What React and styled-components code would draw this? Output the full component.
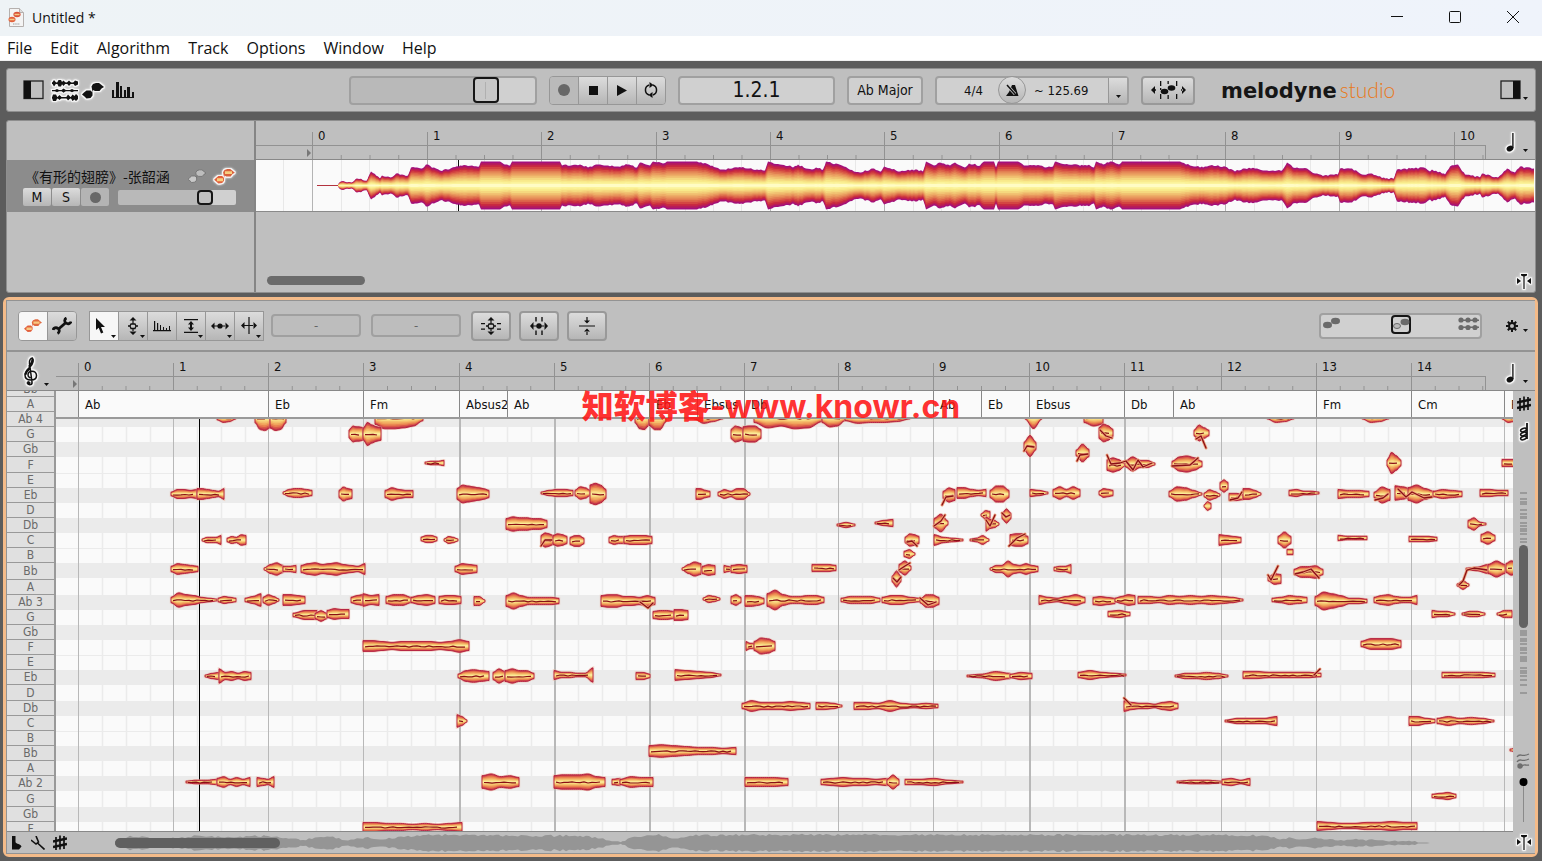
import React from 'react';
import styled, { createGlobalStyle, css } from 'styled-components';

const UI = `'DejaVu Sans Condensed', 'DejaVu Sans', 'Noto Sans CJK SC', sans-serif`;

const GlobalStyle = createGlobalStyle`
  * { box-sizing: border-box; }
  body { margin: 0; background: #5c5c5c; font-family: ${UI}; font-size: 13px; color: #111; }
  button, input { font: inherit; color: inherit; margin: 0; padding: 0; }
  svg { display: block; flex: none; }
`;

/* ---------- data ---------- */

const TRACK_BARS = [312, 427, 541, 656, 770, 884, 999, 1112, 1225, 1339, 1454];
const EDIT_BARS = [78, 173, 268, 363, 459, 554, 649, 744, 838, 933, 1029, 1124, 1221, 1316, 1411, 1504];
const WIDE_BARS = [459, 554, 649, 744, 1029, 1124];

const CHORDS = [
  [78, 'Ab'], [268, 'Eb'], [363, 'Fm'], [459, 'Absus2'], [507, 'Ab'], [649, 'Eb'], [697, 'Ebsus'], [744, 'Db'],
  [933, 'Ab'], [981, 'Eb'], [1029, 'Ebsus'], [1124, 'Db'], [1173, 'Ab'], [1316, 'Fm'], [1411, 'Cm'], [1504, 'Fm'],
];

const KEYS = [
  ['Bb', 6], ['A', 15], ['Ab 4', 15], ['G', 15], ['Gb', 15], ['F', 16], ['E', 15], ['Eb', 15], ['D', 15],
  ['Db', 15], ['C', 15], ['B', 15], ['Bb', 17], ['A', 15], ['Ab 3', 15], ['G', 15], ['Gb', 15], ['F', 15],
  ['E', 15], ['Eb', 15], ['D', 16], ['Db', 15], ['C', 15], ['B', 15], ['Bb', 15], ['A', 15], ['Ab 2', 15],
  ['G', 16], ['Gb', 15], ['F', 15],
];

// start, end, pitch centre, half heights along the note
const NOTES = [
  [217, 236, 418, [2, 5, 4, 1]], [255, 270, 418, [5, 13, 14, 11]], [270, 286, 418, [11, 14, 13, 5]],
  [375, 423, 418, [7, 12, 12, 11, 9, 3]], [635, 649, 418, [5, 12, 13, 8]], [649, 666, 418, [8, 13, 13, 4]],
  [694, 723, 418, [1, 6, 4, 1]], [754, 822, 418, [5, 11, 9, 12, 11, 4]], [822, 845, 418, [5, 10, 9, 3]],
  [845, 910, 418, [3, 6, 5, 5, 4, 1]], [1025, 1042, 418, [1, 12, 1]], [1084, 1103, 418, [5, 9, 7]],
  [1267, 1294, 418, [1, 5, 4, 1]], [1362, 1389, 418, [1, 5, 4, 1]], [1502, 1514, 418, [1, 5, 4]],

  [349, 363, 434, [4, 9, 8, 8, 7]], [363, 381, 434, [6, 13, 10, 8, 7]], [731, 743, 434, [5, 9, 8, 6]],
  [743, 761, 434, [8, 9, 9, 5]], [1099, 1113, 433, [6, 10, 8, 4]], [1194, 1209, 433, [3, 9, 6, 3]],
  [1024, 1036, 446, [4, 12, 4]], [1076, 1089, 453, [3, 10, 4]],

  [425, 444, 463, [1, 2, 2, 3]], [1107, 1125, 465, [6, 8, 6, 1]], [1125, 1155, 464, [3, 8, 4, 4, 1]],
  [1172, 1202, 464, [3, 8, 9, 7, 3]], [1387, 1401, 463, [3, 12, 8, 3]], [1502, 1514, 463, [4, 4, 4]],

  [171, 197, 494, [2, 5, 5, 4, 5]], [197, 224, 494, [6, 6, 5, 4, 3, 6]], [283, 312, 493, [1, 4, 5, 5, 4, 3]],
  [339, 352, 494, [4, 8, 6, 5]], [385, 413, 494, [4, 7, 5, 4, 4]], [457, 489, 494, [6, 10, 9, 8, 7, 6, 4]],
  [541, 573, 493, [1, 3, 4, 4, 3]], [575, 590, 493, [3, 7, 6, 3]], [590, 606, 494, [10, 12, 10, 5]],
  [696, 710, 494, [6, 6, 4, 3]], [718, 750, 494, [2, 5, 3, 6, 6, 1]], [943, 955, 495, [4, 8, 6]],
  [957, 986, 493, [6, 6, 4, 3, 4]], [990, 1009, 494, [4, 9, 9, 4]], [1030, 1048, 493, [4, 3, 1]],
  [1053, 1080, 493, [4, 7, 4, 7, 4]], [1099, 1113, 493, [2, 5, 4, 3]], [1169, 1202, 494, [3, 8, 7, 4, 1]],
  [1204, 1220, 495, [2, 6, 4, 1]], [1220, 1228, 486, [4, 7, 4]], [1204, 1211, 506, [1, 5, 3]],
  [1229, 1243, 497, [4, 4, 3]], [1243, 1261, 494, [6, 6, 4, 1]], [1289, 1319, 493, [3, 4, 2, 2, 1]],
  [1338, 1369, 494, [5, 4, 4, 3]], [1374, 1390, 495, [3, 9, 6]], [1395, 1410, 493, [8, 7, 5]],
  [1408, 1434, 494, [7, 10, 6, 3]], [1433, 1462, 494, [3, 5, 4, 3]], [1480, 1508, 493, [4, 4, 3, 3]],

  [506, 547, 524, [6, 8, 7, 7, 6, 6, 4]], [837, 855, 525, [1, 3, 1]], [875, 893, 523, [1, 3, 4]],
  [934, 948, 523, [5, 10, 2]], [981, 990, 515, [1, 5, 4]], [986, 999, 524, [8, 5, 4, 1]],
  [1002, 1011, 516, [3, 8, 3]], [1468, 1486, 524, [4, 7, 2, 1]],

  [202, 221, 540, [1, 3, 3, 3, 5]], [227, 246, 540, [2, 4, 3, 6, 5]], [421, 437, 539, [2, 4, 4, 2]],
  [444, 458, 540, [1, 4, 3, 1]], [541, 553, 540, [5, 8, 7, 5]], [553, 567, 540, [5, 7, 6, 4]],
  [570, 584, 541, [4, 6, 6, 3]], [609, 624, 540, [3, 5, 4, 4]], [624, 652, 540, [4, 5, 5, 5, 4]],
  [905, 919, 540, [3, 7, 6, 4]], [934, 963, 540, [6, 3, 2, 1]], [970, 989, 540, [1, 2, 5, 1]],
  [1010, 1028, 540, [6, 7, 7, 4]], [1219, 1241, 540, [6, 5, 4, 3]], [1278, 1291, 540, [4, 9, 4]],
  [1287, 1293, 552, [3, 3]], [1338, 1367, 538, [3, 2, 2, 2]], [1409, 1437, 539, [3, 3, 3, 2]],
  [1481, 1495, 538, [4, 7, 3]], [904, 915, 554, [3, 5, 1]],

  [171, 198, 569, [3, 6, 5, 4, 3]], [264, 283, 569, [1, 5, 7, 4]], [283, 296, 569, [3, 3, 4]],
  [301, 365, 569, [4, 6, 7, 5, 6, 7, 5, 4, 3, 6]], [455, 477, 569, [3, 6, 5, 4]], [682, 701, 569, [1, 5, 8, 6]],
  [702, 715, 570, [4, 6, 5]], [724, 732, 569, [4, 3, 2]], [731, 747, 569, [4, 5, 4]], [812, 836, 568, [4, 4, 4, 3]],
  [899, 911, 568, [4, 8, 2]], [892, 901, 579, [3, 9, 3]], [990, 1038, 569, [1, 4, 4, 9, 5, 4, 6, 4, 3]],
  [1054, 1071, 569, [2, 3, 3, 5]], [1294, 1323, 572, [3, 6, 6, 7, 3]], [1268, 1281, 579, [2, 6, 5]],
  [1457, 1469, 585, [1, 5, 1]], [1466, 1488, 569, [1, 2, 5]], [1488, 1505, 569, [5, 9, 5]], [1506, 1516, 568, [5, 8, 7]],

  [171, 217, 600, [3, 8, 6, 5, 3, 2, 1]], [218, 236, 600, [2, 4, 3, 2]], [245, 261, 600, [2, 4, 7]],
  [263, 279, 600, [3, 6, 4, 1]], [283, 305, 600, [6, 6, 5, 4]], [351, 363, 600, [3, 5, 6]], [363, 379, 600, [7, 5, 6]],
  [386, 411, 600, [4, 6, 6, 3]], [411, 435, 600, [3, 5, 6, 4]], [439, 461, 600, [4, 5, 5, 4]],
  [474, 485, 601, [5, 5, 1]], [506, 559, 601, [6, 9, 6, 4, 4, 4, 4, 3]], [601, 655, 601, [6, 7, 7, 5, 5, 4, 6, 4]],
  [703, 720, 599, [1, 4, 3, 1]], [731, 741, 600, [4, 6, 3]], [745, 764, 601, [6, 6, 5, 3]],
  [767, 824, 600, [7, 11, 6, 4, 4, 5, 5, 3]], [841, 880, 600, [2, 4, 4, 4, 2]], [882, 920, 600, [3, 5, 5, 3, 2]],
  [920, 939, 601, [2, 7, 7, 4]], [1039, 1085, 600, [5, 3, 2, 4, 6, 3]], [1093, 1115, 601, [4, 5, 4, 3]],
  [1115, 1135, 600, [2, 4, 6, 5]], [1138, 1243, 600, [4, 4, 3, 5, 4, 5, 4, 5, 4, 3, 1]],
  [1272, 1307, 600, [2, 3, 5, 4, 3]], [1315, 1367, 601, [5, 10, 8, 6, 3, 3, 2]], [1374, 1417, 600, [3, 5, 6, 4, 3, 3, 5]],

  [293, 317, 615, [2, 5, 5]], [315, 327, 616, [3, 6, 3]], [327, 349, 614, [4, 6, 5, 5]], [653, 674, 615, [4, 5, 5, 4]],
  [674, 688, 615, [6, 6, 5]], [1108, 1130, 614, [3, 4, 2]], [1432, 1455, 614, [4, 3, 3, 1]],
  [1462, 1485, 614, [1, 3, 3, 1]], [1497, 1512, 614, [1, 4, 4]],

  [363, 469, 646, [6, 6, 5, 4, 5, 5, 5, 5, 4, 5, 7, 5]], [746, 754, 646, [5, 3, 3]], [754, 775, 646, [5, 9, 8, 5]],
  [1361, 1401, 644, [3, 6, 6, 6, 4]],

  [205, 219, 676, [1, 3, 4]], [219, 251, 676, [8, 4, 5, 3, 5, 4]], [458, 489, 676, [2, 6, 7, 6, 5]],
  [493, 505, 676, [4, 8, 5]], [505, 534, 676, [6, 8, 6, 6, 3]], [554, 593, 675, [5, 3, 3, 2, 2, 8]],
  [636, 650, 676, [4, 4, 2]], [675, 721, 675, [6, 5, 4, 3, 1]], [967, 1010, 676, [1, 2, 5, 3]],
  [1010, 1032, 676, [2, 4, 3]], [1078, 1126, 675, [3, 5, 3, 2, 1]], [1175, 1228, 676, [1, 3, 3, 4, 3, 1]],
  [1243, 1321, 675, [4, 4, 3, 3, 3, 3, 2]], [1442, 1495, 675, [3, 3, 3, 3, 2]],

  [742, 810, 706, [3, 6, 4, 4, 4, 5, 4, 3]], [816, 842, 706, [4, 4, 3, 1]], [854, 938, 706, [4, 4, 3, 6, 3, 2, 3, 2]],
  [1124, 1178, 706, [6, 4, 3, 3, 2, 4, 5, 3]], [457, 467, 721, [7, 5, 1]], [1225, 1277, 721, [1, 3, 3, 3, 5]],
  [1409, 1435, 721, [5, 5, 3, 2]], [1437, 1494, 721, [3, 5, 3, 4, 3, 1]], [649, 736, 751, [6, 7, 6, 5, 4, 4, 3, 4]],
  [1510, 1516, 750, [1, 2]],

  [186, 217, 782, [1, 2, 2, 3]], [217, 250, 782, [4, 6, 3, 5, 3, 5]], [257, 274, 782, [5, 4, 3, 6]],
  [482, 519, 782, [7, 9, 6, 7, 5]], [554, 605, 782, [7, 8, 8, 8, 9, 6, 5]], [612, 620, 782, [3, 4]],
  [620, 653, 782, [3, 6, 5, 5]], [745, 788, 782, [5, 5, 5, 4]], [821, 887, 782, [3, 4, 5, 4, 4, 3, 4]],
  [887, 899, 782, [3, 8, 3]], [905, 963, 782, [3, 3, 4, 2, 1]], [1177, 1222, 782, [1, 2, 2, 1]],
  [1222, 1250, 782, [3, 4, 2, 4]], [1432, 1456, 796, [2, 3, 4, 2]],
  [363, 462, 827, [5, 5, 4, 4, 3, 4, 3, 4, 5]], [1317, 1417, 826, [5, 4, 3, 3, 4, 4, 5, 4, 4]],
];

// pitch glides that leave their note
const GLIDES = [
  '1196,439 1201,436 1206,448', '942,505 946,497 953,496', '934,526 941,521 945,515', '541,546 545,540 552,540',
  '1009,546 1017,538 1025,534', '907,542 912,541 917,546', '1024,451 1027,446 1034,447', '1077,461 1080,455 1088,454',
  '1107,455 1111,464 1120,463 1126,461 1133,470 1138,460 1143,467 1152,463', '1268,575 1271,580 1278,566',
  '1459,585 1463,581 1467,570 1474,568 1487,570', '1295,574 1303,572 1311,569 1319,578', '986,520 990,526 995,515',
  '1172,466 1190,465 1198,458', '1375,500 1383,498 1388,494', '1124,698 1131,705', '1314,675 1320,669',
  '1230,500 1238,498 1242,492', '1002,513 1006,517 1010,515', '1100,430 1106,436 1112,438', '893,578 897,582 901,577',
  '920,598 928,605 936,602', '640,602 648,608 653,603', '1398,489 1406,497 1412,492 1424,498 1432,497', '899,570 905,566 910,563',
];

const TRACK_WAVE = [
  [338, 1], [341, 4], [352, 3], [357, 7], [367, 5], [371, 14], [376, 10], [380, 7], [382, 10], [391, 8], [396, 12],
  [408, 10], [411, 18], [422, 17], [426, 21], [440, 15], [447, 16], [460, 20], [479, 19], [481, 24], [500, 24],
  [505, 21], [510, 20], [512, 24], [560, 24], [562, 20], [580, 21], [588, 18], [598, 21], [606, 20], [618, 19],
  [627, 21], [637, 18], [640, 23], [650, 20], [653, 24], [663, 22], [668, 24], [697, 24], [712, 20], [720, 16],
  [741, 18], [765, 15], [768, 24], [780, 21], [790, 20], [793, 18], [798, 21], [806, 17], [812, 16], [816, 18],
  [823, 16], [826, 24], [842, 20], [854, 14], [861, 13], [872, 17], [881, 14], [884, 19], [900, 14], [915, 16],
  [923, 14], [926, 24], [934, 20], [940, 23], [950, 20], [955, 23], [965, 18], [969, 22], [980, 20], [984, 24],
  [994, 24], [996, 18], [998, 24], [1018, 24], [1024, 20], [1040, 20], [1045, 18], [1053, 19], [1055, 24], [1068, 21],
  [1083, 20], [1090, 20], [1094, 18], [1096, 24], [1103, 21], [1110, 24], [1119, 21], [1122, 24], [1180, 24],
  [1190, 20], [1203, 18], [1210, 20], [1225, 19], [1235, 14], [1245, 17], [1257, 17], [1265, 15], [1282, 15],
  [1287, 23], [1293, 18], [1307, 17], [1315, 12], [1324, 10], [1338, 11], [1340, 17], [1352, 17], [1362, 11],
  [1370, 12], [1385, 7], [1394, 7], [1397, 16], [1410, 17], [1424, 18], [1430, 14], [1432, 16], [1445, 11],
  [1450, 19], [1458, 21], [1465, 11], [1480, 8], [1482, 12], [1498, 8], [1507, 17], [1515, 13], [1520, 19],
  [1534, 17],
];

const OVERVIEW = [
  [115, 2], [130, 8], [160, 5], [170, 5], [200, 8], [225, 6], [265, 8], [290, 5], [300, 3], [330, 7], [345, 3],
  [365, 6], [380, 4], [405, 7], [430, 9], [500, 8], [580, 8], [600, 5], [612, 2], [622, 2], [635, 7], [660, 9],
  [675, 5], [690, 8], [730, 9], [1000, 9], [1220, 9], [1265, 8], [1280, 4], [1290, 6], [1300, 4], [1315, 6],
  [1335, 3], [1360, 4], [1380, 3], [1400, 2], [1430, 0],
];

const MINIMAP = [
  492, 498, 501, 503, 509, 513, 516, 517, 522, 525, 528, 530, 533, 538, 541, 630, 632, 634, 638, 640, 643, 647, 649,
  652, 656, 658, 660, 667, 670, 672, 675, 679, 684, 692,
];

const FIRE = ['#a3107c', '#b81c58', '#c92a40', '#d34642', '#db6249', '#e27e52', '#e8975d', '#edae67', '#f1c373', '#f5d87f', '#f8e98a', '#fbf39a', '#fffcc4'];
const EMBER = ['#c2364a', '#db5a48', '#e98350', '#f0a35c', '#f4bf6c', '#f8d980', '#fbea98'];

const jitter = (n) => {
  const v = Math.sin(n * 12.9898) * 43758.5453;
  return (v - Math.floor(v)) * 2 - 1;
};

/* ---------- shapes ---------- */

const mirror = (points, cy, k) => {
  const top = points.map(([x, h]) => `${x},${(cy - h * k).toFixed(1)}`);
  const bottom = points.map(([x, h]) => `${x},${(cy + h * k).toFixed(1)}`).reverse();
  return [...top, ...bottom].join(' ');
};

const densify = (points, step, amount) => {
  const out = [];
  points.forEach(([x, h], i) => {
    const next = points[i + 1];
    out.push([x, h]);
    if (!next) return;
    for (let px = x + step; px < next[0]; px += step) {
      const t = (px - x) / (next[0] - x);
      const v = h + (next[1] - h) * t;
      out.push([px, v >= 23.5 && h >= 23.5 ? v : Math.max(0.4, v + jitter(px) * amount)]);
    }
  });
  return out;
};

const smooth = (x0, x1, halves) => {
  const out = [];
  const count = Math.max(6, Math.round((x1 - x0) / 2));
  for (let i = 0; i <= count; i++) {
    const pos = (i / count) * (halves.length - 1);
    const a = Math.floor(pos);
    const b = Math.min(a + 1, halves.length - 1);
    const t = pos - a;
    const ease = t * t * (3 - 2 * t);
    out.push([+(x0 + ((x1 - x0) * i) / count).toFixed(1), halves[a] + (halves[b] - halves[a]) * ease]);
  }
  return out;
};

function Note({ x0, x1, cy, halves }) {
  const shape = smooth(x0, x1, halves.map((h) => h * 0.9));
  const line = [];
  for (let x = x0 + 2; x <= x1 - 2; x += 4) {
    line.push(`${x},${(cy + 0.5 + jitter(x + cy) * 0.7).toFixed(1)}`);
  }
  return (
    <g>
      <polygon points={mirror(shape, cy, 1)} fill="none" stroke="#eeb59a" strokeWidth="2.4" strokeOpacity="0.5" />
      {EMBER.map((color, i) => (
        <polygon key={color} points={mirror(shape, cy, 1 - i / EMBER.length)} fill={color} />
      ))}
      <polygon points={mirror(shape, cy, 1)} fill="none" stroke="#b31c3c" strokeWidth="0.9" strokeLinejoin="round" />
      <polyline points={line.join(' ')} fill="none" stroke="#8a0f14" strokeWidth="1.2" strokeLinejoin="round" />
    </g>
  );
}

/* ---------- window frame ---------- */

const Window = styled.div`
  display: flex;
  flex-direction: column;
  height: 100vh;
  min-height: 640px;
  background: #5c5c5c;
  overflow: hidden;
`;

const TitleBar = styled.header`
  display: flex;
  align-items: center;
  flex: none;
  height: 36px;
  padding: 0 0 2px 8px;
  gap: 8px;
  background: linear-gradient(to right, #eef3f6, #eff3fb);
  font: 14px 'Open Sans', sans-serif;
`;

const WindowButtons = styled.div`
  display: flex;
  margin-left: auto;
`;

const WindowButton = styled.button`
  display: grid;
  place-items: center;
  width: 58px;
  height: 34px;
  border: 0;
  background: none;
`;

const MenuBar = styled.nav`
  display: flex;
  align-items: center;
  flex: none;
  gap: 18px;
  height: 25px;
  padding-left: 7px;
  background: #fff;
  border-bottom: 1px solid #f0f0f0;
  font: 16px 'Open Sans', sans-serif;
`;

const MenuItem = styled.button`
  border: 0;
  background: none;
`;

const Workspace = styled.main`
  position: relative;
  display: flex;
  flex-direction: column;
  flex: 1;
  min-height: 0;
  padding: 7px 4px 4px 3px;
`;

const panel = css`
  margin: 0 2px 0 3px;
  background: #bfbfbf;
  border: 1px solid #8f8f8f;
  border-radius: 3px;
`;

/* ---------- controls ---------- */

const Transport = styled.div`
  ${panel}
  display: flex;
  align-items: center;
  gap: 12px;
  flex: none;
  height: 44px;
`;

const ViewButtons = styled.div`
  display: flex;
  align-items: center;
  flex: 0 0 330px;
  gap: 4px;
  padding-left: 16px;
`;

const IconButton = styled.button`
  display: flex;
  align-items: flex-end;
  border: 0;
  background: none;
`;

const glow = css`
  filter: drop-shadow(1px 0 0 #f4f4f4) drop-shadow(-1px 0 0 #f4f4f4) drop-shadow(0 1px 0 #f4f4f4)
    drop-shadow(0 -1px 0 #f4f4f4) drop-shadow(0 0 1px #f4f4f4);
`;

const GlowButton = styled(IconButton)`
  ${glow}
`;

const raised = css`
  display: flex;
  align-items: center;
  justify-content: center;
  border: 1px solid #979797;
  background: linear-gradient(#dcdcdc, #b6b6b6);
`;

const Button = styled.button`
  ${raised}
  width: ${(p) => p.$w}px;
  height: ${(p) => p.$h || 29}px;
  border-width: 2px;
  border-color: #999;
  border-radius: 4px;
`;

const ButtonGroup = styled.div`
  display: flex;
  border: 1px solid #979797;
  border-radius: ${(p) => (p.$square ? 0 : 4)}px;
  overflow: hidden;
`;

const GroupButton = styled.button`
  ${raised}
  box-sizing: content-box;
  position: relative;
  width: 28px;
  height: ${(p) => p.$h || 27}px;
  border: 0;
  border-left: 1px solid #979797;
  ${(p) => p.$active && 'background: #f7f7f7;'}
  ${(p) => p.$disabled && 'background: #bababa;'}
  &:first-child { border-left: 0; }
`;

const Corner = styled.svg`
  position: absolute;
  right: 2px;
  bottom: 2px;
`;

const Field = styled.input`
  width: ${(p) => p.$w}px;
  height: ${(p) => p.$h || 29}px;
  border: 2px solid #a0a0a0;
  border-radius: 4px;
  background: ${(p) => (p.$dim ? '#bdbdbd' : '#d0d0d0')};
  color: ${(p) => (p.$dim ? '#666' : '#111')};
  font-size: ${(p) => p.$size || 13}px;
  text-align: center;
`;

const KeyButton = styled.button`
  width: 76px;
  height: 29px;
  border: 2px solid #a0a0a0;
  border-radius: 4px;
  background: #d0d0d0;
  font-size: 14px;
  white-space: nowrap;
`;

const Tempo = styled.div`
  display: flex;
  align-items: center;
  width: 194px;
  height: 29px;
  border: 2px solid #a0a0a0;
  border-radius: 4px;
  background: #d0d0d0;
`;

const Meter = styled.button`
  width: 61px;
  padding-left: 12px;
  border: 0;
  background: none;
`;

const Metronome = styled.button`
  ${raised}
  width: 28px;
  height: 28px;
  border-radius: 50%;
`;

const TempoInput = styled.input`
  flex: 1;
  width: 60px;
  border: 0;
  padding-left: 8px;
  background: none;
`;

const TempoMenu = styled.button`
  ${raised}
  align-items: flex-end;
  width: 19px;
  height: 25px;
  padding-bottom: 5px;
  border-width: 0 0 0 1px;
`;

const Range = styled.input`
  appearance: none;
  width: ${(p) => p.$w}px;
  height: ${(p) => p.$h}px;
  border: ${(p) => (p.$line ? 2 : 0)}px solid #a0a0a0;
  border-radius: ${(p) => (p.$line ? 4 : 2)}px;
  background: ${(p) => (p.$clear ? 'transparent' : 'linear-gradient(to right, #b9b9b9 70%, #d0d0d0 74%)')};
  &::-webkit-slider-thumb {
    appearance: none;
    width: ${(p) => p.$thumb}px;
    height: ${(p) => p.$thumbH}px;
    border: 2px solid #161616;
    border-radius: 4px;
    background: ${(p) => (p.$line ? 'linear-gradient(#b0b0b0, #b0b0b0) center / 1px 17px no-repeat #c8c8c8' : p.$clear ? 'transparent' : '#c0c0c0')};
  }
`;

const Logo = styled.div`
  display: flex;
  align-items: baseline;
  margin-left: 14px;
  gap: 3px;
  font: bold 21px 'DejaVu Sans', sans-serif;
  color: #161616;
`;

const LogoLight = styled.span`
  font: 300 21px Lato, 'Open Sans', sans-serif;
  color: #e8791c;
`;

const FarRight = styled(IconButton)`
  margin: 0 7px 0 auto;
`;

/* ---------- tracks ---------- */

const Tracks = styled.section`
  ${panel}
  display: flex;
  flex: none;
  height: 173px;
  margin-top: 8px;
`;

const TrackList = styled.div`
  width: 249px;
  padding-top: 39px;
  border-right: 2px solid #858585;
`;

const TrackHead = styled.div`
  display: flex;
  flex-direction: column;
  gap: 1px;
  height: 52px;
  padding: 5px 17px 0 16px;
  background: #8c8c8c;
`;

const TrackLine = styled.div`
  display: flex;
  align-items: center;
`;

const TrackName = styled.span`
  flex: 1;
  padding-left: 2px;
  font: 14px/22px 'Noto Sans CJK SC', sans-serif;
  white-space: nowrap;
`;

const MiniGroup = styled.div`
  display: flex;
  gap: 1px;
  margin-right: 9px;
`;

const MiniButton = styled.button`
  ${raised}
  width: 28px;
  height: 18px;
  border: 0;
  border-radius: 2px;
  font-size: 14px;
  ${(p) => p.$disabled && 'background: #b4b4b4;'}
`;

const TrackPane = styled.div`
  display: flex;
  flex-direction: column;
  flex: 1;
  min-width: 0;
`;

const TrackCanvas = styled.svg`
  width: 100%;
  height: 52px;
  background: #fafafa;
  border-bottom: 1px solid #8a8a8a;
`;

const TrackFooter = styled.div`
  display: flex;
  align-items: flex-end;
  justify-content: space-between;
  flex: 1;
  padding: 0 4px 3px 11px;
`;

const ScrollThumb = styled.div`
  width: 98px;
  height: 9px;
  margin-bottom: 4px;
  border-radius: 5px;
  background: #6b6b6b;
`;

/* ---------- ruler ---------- */

const RulerBox = styled.div`
  display: flex;
  flex: none;
  height: 39px;
  border-bottom: 1px solid #888;
`;

const Scale = styled.div`
  display: flex;
  flex: 1;
  min-width: 0;
  overflow: hidden;
  background:
    linear-gradient(#929292, #929292) 0 24px / 100% 1px no-repeat,
    linear-gradient(#929292, #929292) right bottom / 1px 14px no-repeat;
`;

const Bar = styled.div`
  flex: 0 0 ${(p) => p.$w}px;
  padding-left: 6px;
  line-height: 30px;
  background:
    linear-gradient(#929292, #929292) left bottom / 1px 27px no-repeat,
    linear-gradient(to right, #929292 1px, transparent 1px) left bottom / 25% 4px repeat-x;
  ${(p) => p.$lead && css`
    display: flex;
    align-items: flex-end;
    justify-content: flex-end;
    padding: 0 1px 2px 0;
    background: none;
  `}
`;

const RulerEnd = styled.div`
  display: flex;
  align-items: flex-end;
  gap: 8px;
  width: 49px;
  padding: 0 8px 7px 20px;
`;

const Glow = styled.div`
  ${glow}
`;

/* ---------- editor ---------- */

const Editor = styled.section`
  display: flex;
  flex-direction: column;
  flex: 1;
  min-height: 0;
  margin-top: 4px;
  border: 3px solid #f4bb89;
  border-radius: 6px;
  background: #bfbfbf;
`;

const EditorTools = styled.div`
  display: flex;
  align-items: center;
  flex: none;
  height: 52px;
  padding: 0 7px 0 11px;
  border: solid #939393;
  border-width: 1px 0 2px 1px;
`;

const ToolGap = styled.div`
  width: ${(p) => p.$w}px;
`;

const ViewSwitch = styled.div`
  position: relative;
  margin: 0 24px 0 auto;
  border: 2px solid #a0a0a0;
  border-radius: 4px;
  background: #d0d0d0;
`;

const SwitchIcons = styled.svg`
  position: absolute;
  left: 0;
  top: 0;
  pointer-events: none;
`;

const Body = styled.div`
  display: grid;
  grid-template-columns: 49px 1fr 22px;
  grid-template-rows: 39px 28px 1fr 22px;
  flex: 1;
  min-height: 0;
  border: solid #939393;
  border-width: 0 0 1px 1px;
`;

const ClefCell = styled.div`
  display: flex;
  align-items: flex-end;
  gap: 6px;
  padding: 0 0 4px 17px;
  border-bottom: 1px solid #888;
`;

const EditorRuler = styled.div`
  grid-column: 2 / 4;
`;

const Keys = styled.div`
  grid-row: 2 / 4;
  overflow: hidden;
  border-right: 2px solid #999;
  background: #e0e0e0;
`;

const Key = styled.div`
  display: flex;
  align-items: ${(p) => (p.$h < 10 ? 'flex-end' : 'center')};
  justify-content: center;
  height: ${(p) => p.$h}px;
  overflow: hidden;
  border-bottom: 1px solid #999;
  font-size: 12px;
  line-height: 14px;
  color: #6a6a6a;
`;

const ChordRow = styled.div`
  display: flex;
  overflow: hidden;
  min-width: 0;
  background: #fafafa;
  border-bottom: 2px solid #9a9a9a;
`;

const Chord = styled.div`
  flex: 0 0 ${(p) => p.$w}px;
  overflow: hidden;
  padding-left: ${(p) => (p.$lead ? 0 : 6)}px;
  border-left: ${(p) => (p.$lead ? 0 : 1)}px solid #888;
  background: ${(p) => (p.$lead ? '#ebebeb' : 'none')};
  line-height: 27px;
  white-space: nowrap;
`;

const Roll = styled.div`
  min-width: 0;
  overflow: hidden;
  background: #fafafa;
`;

const RollCanvas = styled.svg`
  width: 100%;
  height: 100%;
`;

const SideColumn = styled.div`
  display: flex;
  flex-direction: column;
  align-items: center;
  grid-row: 2 / 4;
  grid-column: 3;
  min-height: 0;
  overflow: hidden;
  padding-top: 5px;
`;

const Footer = styled.div`
  display: flex;
  align-items: center;
  grid-column: 1 / 3;
  min-width: 0;
  overflow: hidden;
  border-top: 1px solid #888;
`;

const FooterCanvas = styled.svg`
  width: 100%;
  height: 22px;
  flex: 1;
  min-width: 0;
`;

const FooterIcons = styled.div`
  display: flex;
  align-items: center;
  gap: 8px;
  width: 63px;
  padding-left: 4px;
`;

const FooterEnd = styled.div`
  ${glow}
  display: grid;
  place-items: center;
`;

const Watermark = styled.div`
  position: absolute;
  top: 325px;
  left: 0;
  right: 0;
  display: flex;
  align-items: baseline;
  justify-content: center;
  pointer-events: none;
  font: 900 32px/36px 'Noto Sans CJK SC', sans-serif;
  color: rgba(255, 22, 22, 0.9);
`;

const WatermarkUrl = styled.span`
  font: 700 32px/36px Inter, sans-serif;
`;

/* ---------- icons ---------- */

const Caret = () => (
  <svg width="5" height="3" viewBox="0 0 5 3"><path d="M0 0h5L2.5 3z" fill="#111" /></svg>
);

const ToolCaret = () => (
  <Corner width="5" height="3" viewBox="0 0 5 3"><path d="M0 0h5L2.5 3z" fill="#111" /></Corner>
);

function BlobsIcon({ w = 22, h = 17, left = '#111', right = left, line, edge }) {
  return (
    <svg width={w} height={h} viewBox="0 0 22 17">
      <path d="M0 12.5L2 10.500 4.500 8.500H8.500L10.500 10.500V13.500L8.500 16 4.500 16.500 2.500 14.500z" fill={left} stroke={edge} />
      <path d="M10.500 11v-1.500L9.500 4.500 11 2 14 1H17L19.500 3 22 5 19.500 6.500 17.500 9H13L11 8" fill={right} stroke={edge} />
      {line && <path d="M3 12.500H9.500M11.500 5H19" stroke={line} strokeWidth="3" />}
    </svg>
  );
}

const TracksIcon = () => (
  <svg width="26" height="21" viewBox="0 0 26 21" fill="#111">
    <path d="M0 2.500h26v1.500H0zM0 10h26v1.200H0zM0 17h26v1.500H0z" />
    <path d="M0 3l2-3 2.500 3L2 6.500zM5 3l1.500-3H9l1.500 3L9 6.500H6.500zM9 3l2.500-2.500L14 3l-2.500 3zM14.500 3L17 .500 19.500 3 17 6zM21 3l2-2.500 3 1v3L23 6z" />
    <path d="M2 10.600L5 9l3 1.600L5 12.300zM9 10.600L11.500 8.500l3 2.100-3 2.200zM17 10.600L20 9l3 1.600-3 1.700z" />
    <path d="M0 17.500l1-3h3l1.500 3L4 21H1zM5 17.500L7.500 15l2.500 2.500L7.500 20zM14 17.500l2-3 3 3-3 3zM18.500 17.500l2-3 2 1.500 1.500-2 2 2v3l-2 2-1.500-1.500-2 1.500z" />
  </svg>
);

const DockIcon = ({ flip }) => (
  <svg width="21" height="20" viewBox="0 0 21 20">
    <rect x="1" y="1" width="19" height="17.500" fill="none" stroke="#222" strokeWidth="1.300" />
    <rect x={flip ? 13 : 1} y="1" width="7" height="17.500" fill="#111" />
  </svg>
);

const BarsIcon = () => (
  <svg width="22" height="16" viewBox="0 0 22 16" fill="#111">
    <path d="M0 8h2v8H0zM4 0h3v16H4zM8 4h2v12H8zM12 8h2v8h-2zM15 5h3v11h-3zM20 10h2v6h-2zM0 15h22v1H0z" />
  </svg>
);

const QuarterNote = () => (
  <svg width="9" height="19" viewBox="0 0 9 19">
    <ellipse cx="4" cy="15.500" rx="3.500" ry="2.700" transform="rotate(-25 4 15.500)" fill="#111" />
    <path d="M6.900 15V0" stroke="#111" strokeWidth="1.300" />
  </svg>
);

const SplitIcon = () => (
  <svg width="14" height="15" viewBox="0 0 14 15" fill="#111">
    <path d="M6.400 1h1.200v14H6.400zM4 0h6v1.500L7.600 2.500H6.400L4 1.500zM0 4v6l4-3zM14 4v6l-4-3z" />
  </svg>
);

const GridIcon = () => (
  <svg width="14" height="16" viewBox="0 0 14 16" stroke="#111" fill="none">
    <path d="M3 2v13M7 0.500v14M11 1v13" strokeWidth="1.700" />
    <path d="M0 6.500l14-3M0 12l14-3" strokeWidth="2.500" />
  </svg>
);

const ClefIcon = () => (
  <svg width="14" height="29" viewBox="0 0 14 29" fill="none" stroke="#111" strokeLinecap="round">
    <path d="M4 26.500c1 2 4.500 1.500 4-1.500L5.500 6.500C5 3 7 1 8.300 1c1.500 2.500.7 6-2.300 9-3 3-5 4.500-5 8 0 4 3 5 6 5s5.500-1.500 5.500-4.500-2-4.300-4.500-4.300S4 16 4 18c0 1.500.8 2.300 2 2.800" strokeWidth="1.500" />
    <path d="M8.500 2.500c0 3-1.500 4.500-3 6.500M1.600 17c.5-2.500 2-4 4-5.500" strokeWidth="2.200" />
    <circle cx="4.500" cy="26" r="1.400" fill="#111" />
  </svg>
);

const WrenchIcon = () => (
  <svg width="20" height="18" viewBox="0 0 20 18" fill="none" stroke="#111">
    <path d="M6 12.500L14 5.500" strokeWidth="2.800" />
    <path d="M14.500 1c-2 1-2.500 3.500-.5 5s4.500.5 5-1.500" strokeWidth="2.800" />
    <path d="M1 13c.5-2 3-3 5-1.500s1.500 4-.5 5" strokeWidth="2.800" />
  </svg>
);

const ArrowIcon = () => (
  <svg width="10" height="16" viewBox="0 0 10 16"><path d="M0 0v12l2.700-2.300 2.300 5.800 2.300-1L5 9H9z" fill="#111" /></svg>
);

const PitchIcon = ({ sides }) => (
  <svg width="20" height="18" viewBox="0 0 20 18" fill="#111">
    <path d="M10 0l3.500 3.500h-7zM10 18l3.500-3.500h-7zM9.400 3h1.200v4H9.400zM9.400 11h1.200v4H9.400z" />
    <path d="M5 9h2l1-2h4l1 2h2M7 9l1 2.500h4L13 9" fill="none" stroke="#111" strokeWidth="1.300" />
    {sides && <path d="M0 6h4v1.300H0zM0 11.500h4v1.300H0zM16 6h4v1.300h-4zM16 11.500h4v1.300h-4z" />}
  </svg>
);

const FormantIcon = () => (
  <svg width="18" height="12" viewBox="0 0 18 12" fill="#111">
    <path d="M0 10h18v1.200H0zM1 1h1.200v10H1zM4 3h1.200v8H4zM7 5h1v6H7zM10 7h1v4h-1zM13 8h1v3h-1zM16 6h1v5h-1z" />
  </svg>
);

const AmpIcon = () => (
  <svg width="14" height="14" viewBox="0 0 14 14" fill="#111">
    <path d="M0 0h14v1.200H0zM0 12.800h14V14H0zM7 2l3 3.500H4zM7 12L4 8.500h6zM6 5h2v4H6z" />
  </svg>
);

const TimeIcon = () => (
  <svg width="18" height="8" viewBox="0 0 18 8" fill="#111">
    <path d="M0 4l3.500-3.500v7zM18 4l-3.500-3.500v7zM3 3.400h12v1.200H3z" /><circle cx="9" cy="4" r="2.600" />
  </svg>
);

const SeparateIcon = () => (
  <svg width="16" height="17" viewBox="0 0 16 17" fill="#111">
    <path d="M7.400 0h1.200v17H7.400zM0 8.500L3.500 5v7zM16 8.500L12.500 5v7zM3 7.900h10v1.200H3z" />
  </svg>
);

const QuantTimeIcon = () => (
  <svg width="18" height="18" viewBox="0 0 18 18" fill="#111">
    <path d="M0 9l3.500-4v8zM18 9l-3.500-4v8zM3 8.400h12v1.200H3zM5.300 0h1.400v4.500H5.300zM11.300 0h1.400v4.500h-1.400zM5.300 13.500h1.400V18H5.300zM11.300 13.500h1.400V18h-1.400z" />
    <circle cx="9" cy="9" r="2.700" />
  </svg>
);

const LevelIcon = () => (
  <svg width="16" height="20" viewBox="0 0 16 20" fill="#111">
    <path d="M0 9.400h16v1.200H0zM7.400 1h1.200v4H7.400zM8 7.500L5 4.500h6zM7.400 15h1.200v4H7.400zM8 12.500L5 15.500h6z" />
  </svg>
);

const GearIcon = () => (
  <svg width="12" height="12" viewBox="0 0 12 12" fill="none" stroke="#111">
    <circle cx="6" cy="6" r="3" strokeWidth="2" />
    <path d="M6 0v2.500M6 9.500V12M0 6h2.500M9.500 6H12M1.800 1.800l1.700 1.700M8.500 8.500l1.700 1.700M10.200 1.800L8.500 3.500M3.500 8.500l-1.700 1.700" strokeWidth="2" />
  </svg>
);

/* ---------- sections ---------- */

function Ruler({ bars, origin, end }) {
  return (
    <RulerBox>
      <Scale>
        <Bar $lead $w={bars[0] - origin}>
          <svg width="4" height="8" viewBox="0 0 4 8"><path d="M0 0l4 4-4 4z" fill="#777" /></svg>
        </Bar>
        {bars.map((x, i) => (
          <Bar key={x} $w={(bars[i + 1] || end) - x}>{i}</Bar>
        ))}
      </Scale>
      <RulerEnd>
        <Glow><QuarterNote /></Glow>
        <Caret />
      </RulerEnd>
    </RulerBox>
  );
}

function TrackWave() {
  const wave = densify(TRACK_WAVE, 2, 0.8);
  return (
    <TrackCanvas role="img" aria-label="Track waveform">
      <g transform="translate(-256 -160)">
        {TRACK_BARS.map((x) => (
          <g key={x}>
            <path d={`M${x + 0.5} 160v51`} stroke="#b4b4b4" />
            <path d={`M${x - 28.5} 160v51M${x + 29.5} 160v51M${x + 57.5} 160v51`} stroke="#e8e8e8" />
          </g>
        ))}
        <path d="M458.500 160v51" stroke="#111" />
        <path d="M317 185.500h25" stroke="#b3323e" />
        {FIRE.map((color, i) => (
          <polygon key={color} points={mirror(wave, 185.5, 1 - i / FIRE.length)} fill={color} />
        ))}
      </g>
    </TrackCanvas>
  );
}

function PianoRoll() {
  let y = 391;
  const rows = KEYS.map(([name, h], i) => {
    const row = { name, y, i };
    y += h;
    return row;
  });
  return (
    <RollCanvas role="img" aria-label="Notes">
      <g transform="translate(-56 -419)">
        {EDIT_BARS.map((x) => (
          <path key={x} d={`M${x + 24.5} 419v420M${x + 48.5} 419v420M${x + 72.5} 419v420`} stroke="#ebebeb" strokeWidth="1.500" />
        ))}
        {rows.map((r) => (r.name.includes('b')
          ? <rect key={r.i} x="0" y={r.y} width="4000" height="15" fill="#ebebeb" />
          : /[EB]/.test(r.name) && <rect key={r.i} x="0" y={r.y} width="4000" height="1" fill="#ebebeb" />))}
        {EDIT_BARS.map((x) => (
          <rect key={x} x={x} y="419" width={WIDE_BARS.includes(x) ? 2 : 1} height="420" fill="#b8b8b8" />
        ))}
        <rect x="199" y="419" width="1" height="420" fill="#000" />
        {NOTES.map(([x0, x1, cy, halves]) => (
          <Note key={`${x0}-${cy}`} x0={x0} x1={x1} cy={cy} halves={halves} />
        ))}
        {GLIDES.map((points) => (
          <g key={points} fill="none" strokeLinecap="round" strokeLinejoin="round">
            <polyline points={points} stroke="#eea07c" strokeWidth="3" />
            <polyline points={points} stroke="#8a0f14" strokeWidth="1.300" />
          </g>
        ))}
      </g>
    </RollCanvas>
  );
}

function MiniMap() {
  return (
    <svg width="22" height="204" viewBox="0 0 22 204">
      {MINIMAP.map((y) => <rect key={y} x="7" y={y - 490} width="7" height="2" fill="#9a9a9a" />)}
      <rect x="6" y="55" width="9" height="83" rx="4.500" fill="#636363" />
    </svg>
  );
}

function Overview() {
  return (
    <FooterCanvas role="img" aria-label="Overview">
      <g transform="translate(-70 0)">
        <polygon points={mirror(densify(OVERVIEW, 3, 1.2), 11, 0.9)} fill="#959595" />
        <rect x="115" y="6" width="165" height="10" rx="5" fill="#606060" />
      </g>
    </FooterCanvas>
  );
}

const MENU = ['File', 'Edit', 'Algorithm', 'Track', 'Options', 'Window', 'Help'];

export default function App() {
  return (
    <>
      <GlobalStyle />
      <Window>
        <TitleBar>
          <svg width="16" height="19" viewBox="0 0 16 19">
            <path d="M1.500.500h10l4 4v14h-14z" fill="#f4f4f4" stroke="#b5b0ae" />
            <path d="M11.500.500v4h4" fill="#ddd" stroke="#b5b0ae" />
            <ellipse cx="4" cy="11.500" rx="3.500" ry="2.800" fill="#e2603c" />
            <ellipse cx="9" cy="6.500" rx="3.600" ry="2.800" fill="#d95238" />
            <path d="M1.500 11.500h5M6.500 6.500h5" stroke="#f7c884" strokeWidth="1.500" />
            <path d="M5 16h7" stroke="#b9b9b9" strokeWidth="1.500" strokeDasharray="1.500 .7" />
          </svg>
          <span>Untitled *</span>
          <WindowButtons>
            <WindowButton aria-label="Minimize">
              <svg width="12" height="12"><path d="M0 5.500h12" stroke="#111" /></svg>
            </WindowButton>
            <WindowButton aria-label="Maximize">
              <svg width="12" height="12"><rect x=".5" y=".5" width="11" height="11" rx="1" fill="none" stroke="#111" /></svg>
            </WindowButton>
            <WindowButton aria-label="Close">
              <svg width="12" height="12"><path d="M0 0l12 12M12 0L0 12" stroke="#111" /></svg>
            </WindowButton>
          </WindowButtons>
        </TitleBar>
        <MenuBar>
          {MENU.map((item) => <MenuItem key={item}>{item}</MenuItem>)}
        </MenuBar>

        <Workspace>
          <Transport>
            <ViewButtons>
              <IconButton aria-label="Info pane"><DockIcon /></IconButton>
              <ToolGap $w={0} />
              <GlowButton aria-label="Tracks"><TracksIcon /></GlowButton>
              <GlowButton aria-label="Notes"><BlobsIcon /></GlowButton>
              <ToolGap $w={0} />
              <IconButton aria-label="Sound editor"><BarsIcon /></IconButton>
            </ViewButtons>
            <Range type="range" aria-label="Volume" defaultValue={77} $w={188} $h={29} $thumb={26} $thumbH={26} $line />
            <ButtonGroup>
              <GroupButton aria-label="Record" $disabled><svg width="12" height="12"><circle cx="6" cy="6" r="6" fill="#686868" /></svg></GroupButton>
              <GroupButton aria-label="Stop"><svg width="9" height="9"><rect width="9" height="9" fill="#111" /></svg></GroupButton>
              <GroupButton aria-label="Play"><svg width="10" height="11"><path d="M0 0l10 5.500L0 11z" fill="#111" /></svg></GroupButton>
              <GroupButton aria-label="Cycle">
                <svg width="14" height="16" viewBox="0 0 14 16" fill="none" stroke="#111" strokeWidth="1.500">
                  <path d="M5 13A5.300 5.300 0 0 1 5 3M9 3a5.300 5.300 0 0 1 0 10" />
                  <path d="M5.500 0v6l4-3zM8.500 10v6l-4-3z" fill="#111" stroke="none" />
                </svg>
              </GroupButton>
            </ButtonGroup>
            <Field aria-label="Position" defaultValue="1.2.1" $w={157} $size={21} />
            <KeyButton>Ab Major</KeyButton>
            <Tempo>
              <Meter>4/4</Meter>
              <Metronome aria-label="Metronome">
                <svg width="13" height="12" viewBox="0 0 13 12">
                  <path d="M6 1h3l3.500 11H0l3-4z" fill="#111" />
                  <path d="M1 1l8 9" stroke="#d0d0d0" strokeWidth="3" />
                  <path d="M1 1l8 9" stroke="#111" strokeWidth="1.500" />
                </svg>
              </Metronome>
              <TempoInput aria-label="Tempo" defaultValue="~ 125.69" />
              <TempoMenu aria-label="Tempo options"><Caret /></TempoMenu>
            </Tempo>
            <Button aria-label="Auto stretch" $w={54}>
              <svg width="35" height="18" viewBox="0 0 35 18" fill="#111">
                <path d="M0 9l4-4v8zM35 9l-4-4v8zM3 8.300h2v1.400H3zM30 8.300h2v1.400h-2z" />
                <path d="M9 0h1.300v5H9zM9 7h1.300v2H9zM9 13h1.300v5H9zM16.500 0h1.300v3h-1.300zM16.500 14h1.300v4h-1.300zM25 0h1.300v5H25zM25 13h1.300v5H25z" />
                <ellipse cx="13.500" cy="10.500" rx="3.800" ry="2.800" /><ellipse cx="20.500" cy="7" rx="3.800" ry="2.800" />
              </svg>
            </Button>
            <Logo>melodyne<LogoLight>studio</LogoLight></Logo>
            <FarRight aria-label="Layout"><DockIcon flip /><ToolGap $w={2} /><Caret /></FarRight>
          </Transport>

          <Tracks>
            <TrackList>
              <TrackHead>
                <TrackLine>
                  <TrackName>《有形的翅膀》-张韶涵</TrackName>
                  <IconButton aria-label="Reference track"><BlobsIcon w={18} h={14} left="#c8c8c8" right="#bdbdbd" edge="#707070" /></IconButton>
                  <ToolGap $w={8} />
                  <GlowButton aria-label="Edit track"><BlobsIcon w={21} h={16} left="#e2603c" right="#d9603c" line="#f8d080" /></GlowButton>
                  <ToolGap $w={2} />
                </TrackLine>
                <TrackLine>
                  <MiniGroup>
                    <MiniButton>M</MiniButton>
                    <MiniButton>S</MiniButton>
                    <MiniButton aria-label="Record arm" $disabled><svg width="11" height="11"><circle cx="5.500" cy="5.500" r="5.500" fill="#686868" /></svg></MiniButton>
                  </MiniGroup>
                  <Range type="range" aria-label="Track volume" defaultValue={77} $w={118} $h={15} $thumb={16} $thumbH={15} />
                </TrackLine>
              </TrackHead>
            </TrackList>
            <TrackPane>
              <Ruler bars={TRACK_BARS} origin={256} end={1568} />
              <TrackWave />
              <TrackFooter>
                <ScrollThumb />
                <Glow><SplitIcon /></Glow>
              </TrackFooter>
            </TrackPane>
          </Tracks>

          <Editor>
            <EditorTools>
              <ButtonGroup>
                <GroupButton aria-label="Edit notes" $h={28} $active><BlobsIcon w={18} h={15} left="#e2603c" right="#e06a40" line="#f8c880" /></GroupButton>
                <GroupButton aria-label="Assignment" $h={28}><WrenchIcon /></GroupButton>
              </ButtonGroup>
              <ToolGap $w={12} />
              <ButtonGroup $square>
                <GroupButton aria-label="Main tool" $h={28} $active><ArrowIcon /><ToolGap $w={6} /><ToolCaret /></GroupButton>
                <GroupButton aria-label="Pitch tool" $h={28}><PitchIcon /><ToolCaret /></GroupButton>
                <GroupButton aria-label="Formant tool" $h={28}><FormantIcon /></GroupButton>
                <GroupButton aria-label="Amplitude tool" $h={28}><AmpIcon /><ToolCaret /></GroupButton>
                <GroupButton aria-label="Time tool" $h={28}><TimeIcon /><ToolCaret /></GroupButton>
                <GroupButton aria-label="Separation tool" $h={28}><SeparateIcon /><ToolCaret /></GroupButton>
              </ButtonGroup>
              <ToolGap $w={7} />
              <Field aria-label="Pitch" defaultValue="-" $w={90} $h={23} $dim />
              <ToolGap $w={10} />
              <Field aria-label="Cents" defaultValue="-" $w={90} $h={23} $dim />
              <ToolGap $w={10} />
              <Button aria-label="Quantize pitch" $w={40} $h={30}><PitchIcon sides /></Button>
              <ToolGap $w={8} />
              <Button aria-label="Quantize time" $w={40} $h={30}><QuantTimeIcon /></Button>
              <ToolGap $w={8} />
              <Button aria-label="Leveling" $w={40} $h={30}><LevelIcon /></Button>
              <ViewSwitch>
                <SwitchIcons width="159" height="19" viewBox="0 0 159 19">
                  <g fill="#6a6a6a">
                    <ellipse cx="6.500" cy="10" rx="4.500" ry="3.300" /><ellipse cx="14.500" cy="6" rx="4.500" ry="3.300" />
                    <ellipse cx="84" cy="7" rx="4.500" ry="3.300" />
                    <ellipse cx="76" cy="11" rx="3.500" ry="2.500" fill="#bbb" stroke="#6a6a6a" />
                    <path d="M138 4.500h20v1.500h-20zM138 11.500h20v1.500h-20z" />
                    {[140, 147, 154].map((x) => <g key={x}><circle cx={x} cy="5" r="2.600" /><circle cx={x} cy="12.500" r="2.600" /></g>)}
                  </g>
                </SwitchIcons>
                <Range type="range" aria-label="View" defaultValue={50} $w={159} $h={19} $thumb={20} $thumbH={19} $clear />
              </ViewSwitch>
              <IconButton aria-label="Settings"><GearIcon /><ToolGap $w={5} /><Caret /></IconButton>
            </EditorTools>

            <Body>
              <ClefCell><Glow><ClefIcon /></Glow><Caret /></ClefCell>
              <EditorRuler><Ruler bars={EDIT_BARS.slice(0, 15)} origin={56} end={1506} /></EditorRuler>
              <Keys>
                {KEYS.map(([name, h], i) => <Key key={i} $h={h}>{name}</Key>)}
              </Keys>
              <ChordRow>
                <Chord $lead $w={22} />
                {CHORDS.map(([x, name], i) => (
                  <Chord key={x} $w={(CHORDS[i + 1] ? CHORDS[i + 1][0] : 1600) - x}>{name}</Chord>
                ))}
              </ChordRow>
              <SideColumn>
                <GridIcon />
                <Glow>
                  <svg width="10" height="38" viewBox="0 0 10 38" fill="none" stroke="#111" strokeWidth="1.500">
                    <path d="M8 11v16" strokeWidth="1.800" />
                    <ellipse cx="4.500" cy="18" rx="3" ry="1.600" transform="rotate(-20 4.500 18)" />
                    <ellipse cx="4.500" cy="22" rx="3" ry="1.600" transform="rotate(-20 4.500 22)" />
                    <ellipse cx="4.500" cy="26" rx="3" ry="1.600" transform="rotate(-20 4.500 26)" />
                  </svg>
                </Glow>
                <svg width="22" height="40" />
                <MiniMap />
                <svg width="22" height="132" viewBox="0 0 22 132">
                  <path d="M4 63c3-5 4 1 12-3M4 68c3-5 4 1 12-3M8 73c3-4 4-1 8-2" fill="none" stroke="#6e6e6e" strokeWidth="1.300" />
                  <circle cx="7" cy="72" r="2.700" fill="#6e6e6e" />
                  <circle cx="10.500" cy="88" r="4" fill="#000" />
                  <path d="M10.500 92v36" stroke="#8a8a8a" />
                </svg>
              </SideColumn>
              <Roll><PianoRoll /></Roll>
              <Footer>
                <FooterIcons>
                  <svg width="12" height="14" viewBox="0 0 12 14"><path d="M1 0h3.500v6C5 8 10 8 10.500 10.500L8 13.500H1z" fill="#111" /></svg>
                  <svg width="14" height="14" viewBox="0 0 14 14" stroke="#111" fill="none" strokeWidth="1.600"><path d="M0 4l5 4 2.500-2L5 0M6.500 7l7 6.500" /></svg>
                  <GridIcon />
                </FooterIcons>
                <Overview />
              </Footer>
              <FooterEnd><SplitIcon /></FooterEnd>
            </Body>
          </Editor>

          <Watermark><span>知软博客</span><WatermarkUrl>-www.knowr.cn</WatermarkUrl></Watermark>
        </Workspace>
      </Window>
    </>
  );
}
